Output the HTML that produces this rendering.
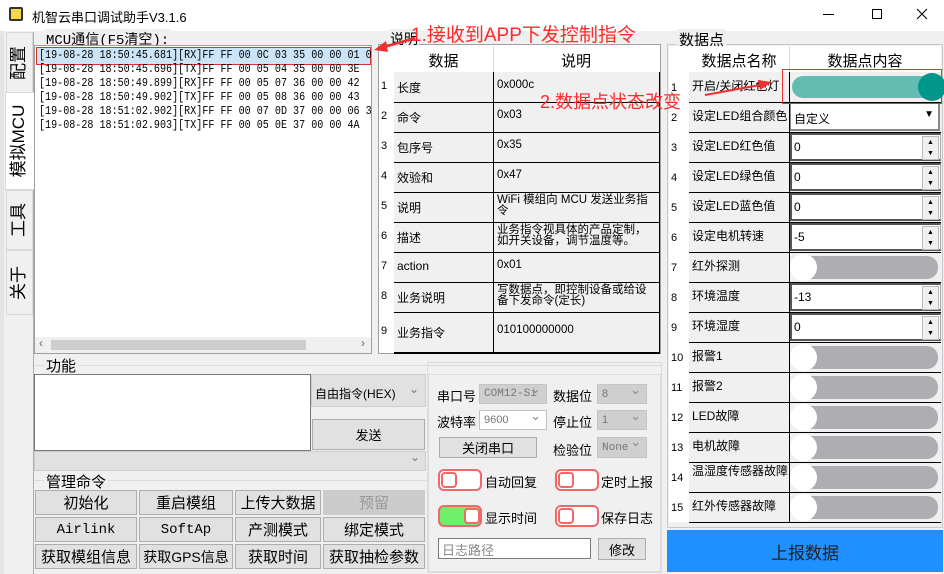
<!DOCTYPE html>
<html><head><meta charset="utf-8"><style>
*{box-sizing:border-box;margin:0;padding:0}
body{width:944px;height:574px;background:#f0f0f0;position:relative;overflow:hidden;font-family:"Liberation Sans","Noto Sans CJK SC",sans-serif;font-size:12px;color:#000}
.a{position:absolute}
.mono{font-family:"Liberation Mono","Noto Sans CJK SC",monospace}
.btn{position:absolute;background:#e1e1e1;border:1px solid #adadad;display:flex;align-items:center;justify-content:center;font-size:15px}
.cmb{position:absolute;background:#cfcfcf;border:1px solid #c4c4c4;color:#777;font-size:11px;padding-left:4px;display:flex;align-items:center}
.cmb:after{content:"⌄";position:absolute;right:5px;top:-3px;color:#888;font-size:13px}
.lbl{position:absolute;font-size:13px}
.tg{position:absolute;width:44px;height:22px;border:2px solid #f0686a;border-radius:6px;background:#fff}
.tg i{position:absolute;top:1px;width:16px;height:16px;border:2px solid #f0686a;border-radius:4px;background:#fff}
.vt{position:absolute;font-size:17px;white-space:nowrap;transform:rotate(-90deg);transform-origin:center;text-align:center;width:100px;height:22px;line-height:22px}
</style></head><body>
<!-- title bar -->
<div class="a" style="left:0;top:0;width:944px;height:31px;background:#fff"></div>
<div class="a" style="left:9px;top:7px;width:14px;height:14px;border:2px solid #333;background:#f5d84a;border-radius:2px"></div>
<div class="a" style="left:32px;top:7px;font-size:13px">机智云串口调试助手V3.1.6</div>
<div class="a" style="left:823px;top:14px;width:11px;height:1px;background:#000"></div>
<div class="a" style="left:872px;top:9px;width:10px;height:10px;border:1px solid #000"></div>
<svg class="a" style="left:916px;top:8px" width="12" height="12"><path d="M1 1L11 11M11 1L1 11" stroke="#000" stroke-width="1.1"/></svg>
<div class="a" style="left:0;top:31px;width:4px;height:543px;background:#e4e4e4"></div>
<!-- left tabs -->
<div class="a" style="left:33px;top:32px;width:1px;height:542px;background:#adadad"></div>
<div class="a" style="left:6px;top:32px;width:27px;height:62px;border:1px solid #d9d9d9;background:#f0f0f0"></div>
<div class="vt" style="left:-31px;top:52px">配置</div>
<div class="a" style="left:5px;top:92px;width:29px;height:98px;background:#fff;border:1px solid #d9d9d9;border-right:none"></div>
<div class="vt" style="left:-31px;top:130px">模拟MCU</div>
<div class="a" style="left:6px;top:190px;width:27px;height:60px;border:1px solid #d9d9d9"></div>
<div class="vt" style="left:-31px;top:209px">工具</div>
<div class="a" style="left:6px;top:250px;width:27px;height:65px;border:1px solid #d9d9d9"></div>
<div class="vt" style="left:-31px;top:272px">关于</div>
<!-- MCU -->
<div class="a mono" style="left:44px;top:29px;font-size:14px;background:#f0f0f0;padding:0 2px">MCU通信(F5清空):</div>
<div class="a" style="left:34px;top:45px;width:338px;height:309px;background:#fff;border:1px solid #a0a0a0;overflow:hidden">
<div class="a" style="left:1px;top:1px;width:335px;height:18px;background:#cce4f7;border:1px solid #e03030"></div>
<div class="a mono" style="left:4px;top:2px;font-size:12px;line-height:14px;white-space:pre;transform:scaleX(.84);transform-origin:left top">[19-08-28 18:50:45.681][RX]FF FF 00 0C 03 35 00 00 01 0
[19-08-28 18:50:45.696][TX]FF FF 00 05 04 35 00 00 3E
[19-08-28 18:50:49.899][RX]FF FF 00 05 07 36 00 00 42
[19-08-28 18:50:49.902][TX]FF FF 00 05 08 36 00 00 43
[19-08-28 18:51:02.902][RX]FF FF 00 07 0D 37 00 00 06 3
[19-08-28 18:51:02.903][TX]FF FF 00 05 0E 37 00 00 4A</div>
<div class="a" style="left:0;top:291px;width:336px;height:16px;background:#f0f0f0"></div>
<div class="a" style="left:16px;top:294px;width:255px;height:10px;background:#cdcdcd"></div>
<div class="a" style="left:4px;top:290px;color:#666">‹</div><div class="a" style="left:326px;top:290px;color:#666">›</div>
</div>
<!-- 说明 table -->
<div class="a" style="left:378px;top:44px;width:283px;height:310px;border:1px solid #a0a0a0;background:#fff"></div>
<div class="a" style="left:389px;top:29px;font-size:14px;background:#f0f0f0;padding:0 1px">说明</div>
<div class="a" style="left:394px;top:46px;width:266px;height:307px;background:#f0f0f0"></div>
<div class="a" style="left:394px;top:46px;width:266px;height:26px;background:#fff"></div>
<div class="a" style="left:394px;top:50px;width:99px;text-align:center;font-size:15px">数据</div>
<div class="a" style="left:493px;top:50px;width:166px;text-align:center;font-size:15px">说明</div>
<div class="a" style="left:493px;top:46px;width:1px;height:26px;background:#ddd"></div>
<div class="a" style="left:493px;top:72px;width:1px;height:280px;background:#000"></div>
<div class="a" style="left:659px;top:72px;width:1px;height:280px;background:#000"></div>
<div id="t1"></div>
<!-- annotations -->
<div class="a" style="left:411px;top:20px;font-size:19px;color:#ff2a2a">1.接收到APP下发控制指令</div>
<svg class="a" style="left:370px;top:30px" width="50" height="30"><line x1="45" y1="8" x2="14" y2="17" stroke="#f03030" stroke-width="2.5"/><polygon points="4,20 16,11 18,22" fill="#f03030"/></svg>
<!-- 数据点 -->
<div class="a" style="left:667px;top:44px;width:276px;height:484px;border:1px solid #c8c8c8"></div>
<div class="a" style="left:677px;top:29px;font-size:15px;background:#f0f0f0;padding:0 2px">数据点</div>
<div class="a" style="left:669px;top:46px;width:272px;height:476px;background:#fff"></div>
<div class="a" style="left:689px;top:72px;width:252px;height:450px;background:#f0f0f0"></div>
<div class="a" style="left:689px;top:50px;width:100px;text-align:center;font-size:15px">数据点名称</div>
<div class="a" style="left:789px;top:50px;width:152px;text-align:center;font-size:15px">数据点内容</div>
<div class="a" style="left:789px;top:46px;width:1px;height:26px;background:#ddd"></div>
<div class="a" style="left:789px;top:72px;width:1px;height:450px;background:#000"></div>
<div id="t2"></div>
<div class="a" style="left:782px;top:69px;width:160px;height:35px;border:1px solid #f03030"></div>
<div class="a" style="left:540px;top:88px;font-size:18px;color:#ff2a2a">2.数据点状态改变</div>
<svg class="a" style="left:700px;top:75px" width="80" height="30"><line x1="5" y1="20" x2="60" y2="10" stroke="#f03030" stroke-width="2"/><polygon points="72,7 58,5 60,15" fill="#f03030"/></svg>
<div class="a" style="left:667px;top:530px;width:276px;height:42px;background:#1e90ff;color:#222;font-size:17px;display:flex;align-items:center;justify-content:center">上报数据</div>
<!-- 功能 -->
<div class="a" style="left:34px;top:365px;width:627px;height:1px;background:#dcdcdc"></div>
<div class="a" style="left:44px;top:355px;font-size:15px;background:#f0f0f0;padding:0 2px">功能</div>
<div class="a" style="left:34px;top:374px;width:277px;height:77px;background:#fff;border:1px solid #7a7a7a"></div>
<div class="a" style="left:311px;top:374px;width:115px;height:33px;background:#e1e1e1;border:1px solid #ccc;font-size:12px;padding:10px 3px">自由指令(HEX)<span style="position:absolute;right:6px;top:7px;color:#777">⌄</span></div>
<div class="btn" style="left:312px;top:419px;width:113px;height:31px;font-size:13px">发送</div>
<div class="a" style="left:34px;top:451px;width:392px;height:20px;background:#e1e1e1;border:1px solid #ccc"><span style="position:absolute;right:5px;top:-2px;color:#777">⌄</span></div>
<div class="a" style="left:34px;top:480px;width:393px;height:1px;background:#dcdcdc"></div>
<div class="a" style="left:44px;top:471px;font-size:15px;background:#f0f0f0;padding:0 2px">管理命令</div>
<div class="btn" style="left:35px;top:490px;width:102px;height:25px">初始化</div>
<div class="btn" style="left:139px;top:490px;width:94px;height:25px">重启模组</div>
<div class="btn" style="left:235px;top:490px;width:86px;height:25px">上传大数据</div>
<div class="btn" style="left:323px;top:490px;width:102px;height:25px;background:#ccc;border-color:#ccc;color:#999">预留</div>
<div class="btn mono" style="left:35px;top:517px;width:102px;height:25px;font-size:14px">Airlink</div>
<div class="btn mono" style="left:139px;top:517px;width:94px;height:25px;font-size:14px">SoftAp</div>
<div class="btn" style="left:235px;top:517px;width:86px;height:25px">产测模式</div>
<div class="btn" style="left:323px;top:517px;width:102px;height:25px">绑定模式</div>
<div class="btn" style="left:35px;top:544px;width:102px;height:25px">获取模组信息</div>
<div class="btn" style="left:139px;top:544px;width:94px;height:25px;font-size:14px">获取GPS信息</div>
<div class="btn" style="left:235px;top:544px;width:86px;height:25px">获取时间</div>
<div class="btn" style="left:323px;top:544px;width:102px;height:25px">获取抽检参数</div>
<!-- serial -->
<div class="a" style="left:427px;top:362px;width:235px;height:211px;border:1px solid #dcdcdc"></div>
<div class="a" style="left:428px;top:374px;width:233px;height:198px;border:1px solid #dcdcdc"></div>
<div class="lbl" style="left:437px;top:386px">串口号</div>
<div class="cmb mono" style="left:479px;top:384px;width:68px;height:20px">COM12-Si</div>
<div class="lbl" style="left:553px;top:386px">数据位</div>
<div class="cmb" style="left:597px;top:384px;width:50px;height:20px">8</div>
<div class="lbl" style="left:437px;top:412px">波特率</div>
<div class="cmb" style="left:479px;top:410px;width:68px;height:20px;background:#fff">9600</div>
<div class="lbl" style="left:553px;top:412px">停止位</div>
<div class="cmb" style="left:597px;top:410px;width:50px;height:20px">1</div>
<div class="btn" style="left:439px;top:437px;width:98px;height:21px;font-size:13px">关闭串口</div>
<div class="lbl" style="left:553px;top:440px">检验位</div>
<div class="cmb mono" style="left:597px;top:437px;width:50px;height:21px">None</div>
<div class="tg" style="left:438px;top:469px"><i style="left:1px"></i></div><div class="lbl" style="left:485px;top:472px">自动回复</div>
<div class="tg" style="left:555px;top:469px"><i style="left:1px"></i></div><div class="lbl" style="left:601px;top:472px">定时上报</div>
<div class="tg" style="left:438px;top:505px;background:#6ef06a"><i style="left:24px"></i></div><div class="lbl" style="left:485px;top:508px">显示时间</div>
<div class="tg" style="left:555px;top:505px"><i style="left:1px"></i></div><div class="lbl" style="left:601px;top:508px">保存日志</div>
<div class="a" style="left:438px;top:538px;width:153px;height:21px;background:#fff;border:1px solid #7a7a7a;color:#888;font-size:13px;padding:1px 3px">日志路径</div>
<div class="btn" style="left:598px;top:538px;width:48px;height:22px;font-size:13px">修改</div>
<script>
var r1=[["长度","0x000c"],["命令","0x03"],["包序号","0x35"],["效验和","0x47"],["说明","WiFi 模组向 MCU 发送业务指令"],["描述","业务指令视具体的产品定制，如开关设备，调节温度等。"],["action","0x01"],["业务说明","写数据点，即控制设备或给设备下发命令(定长)"],["业务指令","010100000000"]];
var h="";
r1.forEach(function(r,i){var y=72+i*30,hh=(i==8?40:30);
h+='<div class="a" style="left:381px;top:'+(y+(i==8?13:8))+'px;font-size:11px" >'+(i+1)+'</div>';
h+='<div class="a" style="left:397px;top:'+(y+(i==8?12:7))+'px;font-size:12px">'+r[0]+'</div>';
h+='<div class="a" style="left:497px;top:'+(y+(r[1].length>14?3:(i==8?13:8)))+'px;width:160px;font-size:11.5px;line-height:11px">'+r[1]+'</div>';
h+='<div class="a" style="left:394px;top:'+(y+hh)+'px;width:266px;height:'+(i==8?2:1)+'px;background:#000"></div>';});
document.getElementById('t1').outerHTML=h;
var r2=["开启/关闭红色灯","设定LED组合颜色","设定LED红色值","设定LED绿色值","设定LED蓝色值","设定电机转速","红外探测","环境温度","环境湿度","报警1","报警2","LED故障","电机故障","温湿度传感器故障","红外传感器故障"];
var v={2:"0",3:"0",4:"0",5:"0",6:"-5",8:"-13",9:"0"};
h="";
r2.forEach(function(n,i){var k=i+1,y=72+i*30;
h+='<div class="a" style="left:671px;top:'+(y+10)+'px;font-size:11px">'+k+'</div>';
h+='<div class="a" style="left:692px;top:'+(y+(k==14?3:8))+'px;width:96px;font-size:12px;line-height:12px">'+n+'</div>';
h+='<div class="a" style="left:689px;top:'+(y+30)+'px;width:252px;height:1px;background:#000"></div>';
if(k==1){h+='<div class="a" style="left:792px;top:'+(y+4)+'px;width:150px;height:22px;border-radius:11px;background:#62bcb2"></div><div class="a" style="left:918px;top:'+(y+1)+'px;width:28px;height:28px;border-radius:14px;background:#009688"></div>';}
else if(k==2){h+='<div class="a" style="left:790px;top:'+(y+1)+'px;width:150px;height:28px;background:#fff;border:1px solid #888;border-bottom:2px solid #888;border-right:2px solid #888;padding:6px 3px;font-size:12px">自定义<span style="position:absolute;right:4px;top:5px;font-size:10px">▼</span></div>';}
else if(v[k]!==undefined){h+='<div class="a" style="left:790px;top:'+(y+1)+'px;width:151px;height:28px;background:#fff;border:2px solid #555;border-right:1px solid #aaa;padding:5px 2px;font-size:12px">'+v[k]+'<div class="a" style="right:1px;top:1px;width:17px;height:24px;background:#f0f0f0;border:1px solid #bbb;font-size:7px;line-height:11px;text-align:center">▲<br>▼</div></div>';}
else{h+='<div class="a" style="left:792px;top:'+(y+4)+'px;width:146px;height:23px;border-radius:11px;background:#adadb2"></div><div class="a" style="left:790px;top:'+(y+2)+'px;width:27px;height:27px;border-radius:14px;background:#fff"></div>';}
});
document.getElementById('t2').outerHTML=h;
</script>
</body></html>
